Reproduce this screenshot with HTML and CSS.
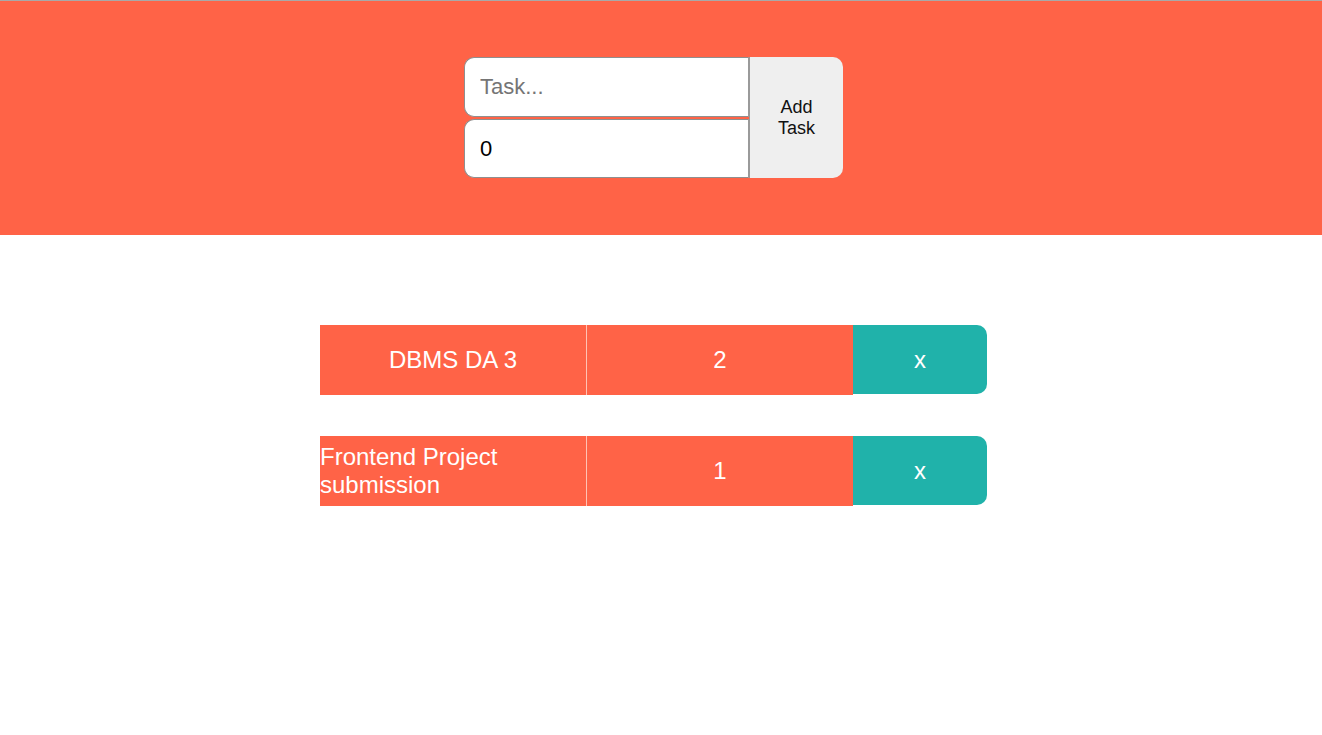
FILE: index.html
```html
<!DOCTYPE html>
<html>
<head>
<meta charset="utf-8">
<link rel="stylesheet" href="styles.css">
</head>
<body>
<header class="header">
  <form class="add-form">
    <div class="fields">
      <input class="field field-top" type="text" placeholder="Task...">
      <input class="field field-bottom" type="number" value="0">
    </div>
    <button class="add-btn" type="button">Add Task</button>
  </form>
</header>
<main class="list">
  <div class="task">
    <div class="cell name">DBMS DA 3</div>
    <div class="cell days">2</div>
    <button class="del" type="button">x</button>
  </div>
  <div class="task">
    <div class="cell name">Frontend Project submission</div>
    <div class="cell days">1</div>
    <button class="del" type="button">x</button>
  </div>
</main>
</body>
</html>
```

FILE: styles.css
```css
html, body {
  margin: 0;
  padding: 0;
  background: #fff;
  font-family: "Liberation Sans", Arial, sans-serif;
}

.header {
  background: #ff6347;
  border-top: 1px solid #a9a9a9;
  height: 234px;
  display: flex;
  justify-content: center;
  align-items: flex-start;
  padding: 0 15px 0 0;
}

.add-form {
  display: flex;
  margin-top: 56px;
}

.fields {
  display: flex;
  flex-direction: column;
  gap: 2px;
}

.field {
  width: 285px;
  height: 60px;
  box-sizing: border-box;
  border: 1px solid #8f8f8f;
  border-right: 1px solid #9a9a9a;
  border-radius: 10px 0 0 10px;
  padding: 0 15px;
  font-family: "Liberation Sans", Arial, sans-serif;
  font-size: 22px;
  color: #000;
  background: #fff;
  outline: none;
}

.field-bottom {
  height: 59px;
}

.field::placeholder {
  color: #757575;
}

.field::-webkit-outer-spin-button,
.field::-webkit-inner-spin-button {
  -webkit-appearance: none;
  margin: 0;
}

.add-btn {
  width: 94px;
  height: 121px;
  box-sizing: border-box;
  background: #efefef;
  border: none;
  border-left: 1px solid #9a9a9a;
  border-radius: 0 10px 10px 0;
  font-family: "Liberation Sans", Arial, sans-serif;
  font-size: 18px;
  line-height: 21px;
  color: #111;
  padding: 0 16px;
}

.list {
  display: flex;
  flex-direction: column;
  align-items: center;
  gap: 41px;
  padding: 90px 15px 0 0;
}

.task {
  display: flex;
  width: 667px;
  height: 70px;
}

.cell {
  width: 266px;
  height: 70px;
  background: #ff6347;
  color: #fff;
  font-size: 24px;
  display: flex;
  justify-content: center;
  align-items: center;
  box-sizing: border-box;
}

.name {
  border-right: 1px solid #ffc2b5;
  width: 267px;
}

.del {
  width: 134px;
  height: 69px;
  background: #20b2aa;
  color: #fff;
  border: none;
  border-radius: 0 10px 10px 0;
  font-family: "Liberation Sans", Arial, sans-serif;
  font-size: 24px;
  padding: 0;
}
```
